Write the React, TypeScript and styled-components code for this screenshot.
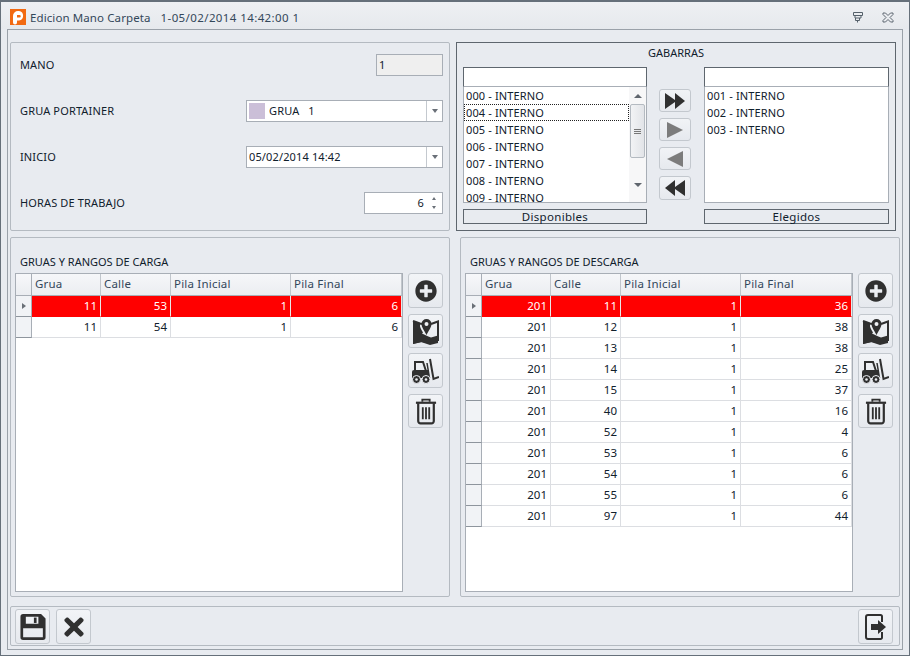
import styled, { createGlobalStyle } from "styled-components";
import { FaPlusCircle, FaTimes } from "react-icons/fa";

const GlobalStyle = createGlobalStyle`
    html, body {
        margin: 0;
        padding: 0;
        background: #e8ebf0;
    }
    * {
        box-sizing: border-box;
    }
`;

const Frame = styled.div`
    width: 910px;
    height: 656px;
    border: 1px solid #66707a;
    border-top-width: 2px;
    background: #e8ebf0;
    font-family: "Noto Sans", "Open Sans", sans-serif;
    font-size: 11px;
    color: #10202c;
    overflow: hidden;
    display: flex;
    flex-direction: column;
`;

const TitleBar = styled.div`
    height: 27px;
    flex: none;
    display: flex;
    align-items: center;
    padding: 3px 15px 0 9px;
    background: linear-gradient(#eef0f3, #e6e9ed);
    font-size: 11.5px;
    color: #33475a;
`;

const TitleText = styled.span`
    margin-left: 4px;
    white-space: pre;
    letter-spacing: 0.1px;
`;

const TitleDoc = styled.span`
    margin-left: 10px;
    white-space: pre;
    letter-spacing: 0.4px;
`;

const TitleIcons = styled.div`
    margin-left: auto;
    display: flex;
    align-items: center;
    gap: 18px;
`;

const Inner = styled.div`
    flex: 1;
    margin: 0 6px 6px 6px;
    border: 1px solid #9aa1a9;
    padding: 12px 2px 3px 2px;
    display: flex;
    flex-direction: column;
    gap: 6px;
`;

const TopRow = styled.div`
    height: 189px;
    flex: none;
    display: flex;
    gap: 6px;
`;

const Panel = styled.div`
    width: 440px;
    border: 1px solid #b4bac1;
    border-radius: 2px;
`;

const FormPanel = styled(Panel)`
    padding: 11px 6px 0 9px;
    display: flex;
    flex-direction: column;
    gap: 24px;
    letter-spacing: 0.14px;
`;

const FormRow = styled.div`
    height: 22px;
    display: flex;
    align-items: center;
    justify-content: space-between;
`;

const RowLabel = styled.span`
    position: relative;
    top: -1px;
`;

const Field = styled.div<{ $w: number; $ro?: boolean }>`
    width: ${(p) => p.$w}px;
    height: 22px;
    border: 1px solid #a8aeb6;
    background: ${(p) => (p.$ro ? "#efefef" : "#fff")};
    display: flex;
    align-items: center;
    padding-left: 2px;
    line-height: 18px;
`;

const Swatch = styled.div`
    width: 16px;
    height: 16px;
    margin-right: 4px;
    background: #cbbfd8;
`;

const GruaName = styled.span`
    white-space: pre;
`;

const DropBtn = styled.div`
    margin-left: auto;
    width: 16px;
    height: 100%;
    border-left: 1px solid #c4c9cf;
    display: flex;
    align-items: center;
    justify-content: center;
    &::after {
        content: "";
        border-left: 3.5px solid transparent;
        border-right: 3.5px solid transparent;
        border-top: 4px solid #6a7078;
    }
`;

const SpinValue = styled.span`
    margin-left: auto;
    margin-right: 2px;
`;

const Spin = styled.div`
    width: 16px;
    height: 100%;
    display: flex;
    flex-direction: column;
    align-items: center;
    justify-content: center;
    gap: 6px;
`;

const SpinArrow = styled.div<{ $up?: boolean }>`
    border-left: 2.5px solid transparent;
    border-right: 2.5px solid transparent;
    ${(p) => (p.$up ? "border-bottom" : "border-top")}: 3px solid #6a7078;
`;

const GabarrasPanel = styled(Panel)`
    border: 1px solid #5e666e;
    border-radius: 0;
    padding: 0 6px;
    display: flex;
    flex-direction: column;
`;

const GabTitle = styled.div`
    height: 24px;
    flex: none;
    line-height: 20px;
    text-align: center;
`;

const GabBody = styled.div`
    display: flex;
    gap: 12px;
`;

const GabColumn = styled.div<{ $w: number; $right?: boolean }>`
    width: ${(p) => p.$w}px;
    margin-left: ${(p) => (p.$right ? 1 : 0)}px;
    display: flex;
    flex-direction: column;
`;

const FilterBox = styled.div`
    height: 20px;
    background: #fff;
    border: 1px solid #5e666e;
    border-bottom-color: #a8aeb6;
`;

const ListBox = styled.div`
    height: 116px;
    background: #fff;
    border: 1px solid #a8aeb6;
    border-top: none;
    display: flex;
    overflow: hidden;
`;

const ListItems = styled.div`
    flex: 1;
    min-width: 0;
    letter-spacing: 0.14px;
`;

const ListItem = styled.div<{ $focus?: boolean }>`
    height: 17px;
    line-height: 15px;
    padding-left: 1px;
    white-space: nowrap;
    border: 1px dotted ${(p) => (p.$focus ? "#222" : "transparent")};
`;

const ScrollBar = styled.div`
    width: 17px;
    flex: none;
    background: #f7f7f8;
    display: flex;
    flex-direction: column;
    align-items: center;
    padding-top: 7px;
`;

const ScrollThumb = styled.div`
    width: 15px;
    height: 54px;
    margin-top: 6px;
    background: linear-gradient(90deg, #f2f3f5, #e2e4e8);
    border: 1px solid #b4bac1;
    border-radius: 2px;
    display: flex;
    flex-direction: column;
    align-items: center;
    justify-content: center;
    gap: 1px;
`;

const Grip = styled.div`
    width: 7px;
    height: 1px;
    background: #777;
`;

const ScrollArrow = styled.div<{ $up?: boolean }>`
    border-left: 4.5px solid transparent;
    border-right: 4.5px solid transparent;
    ${(p) => (p.$up ? "border-bottom" : "border-top")}: 4px solid #60666e;
    ${(p) => (p.$up ? "" : "margin-top: 25px;")}
`;

const ColFooter = styled.div`
    height: 15px;
    margin-top: 6px;
    border: 1px solid #5e666e;
    font-size: 11.5px;
    line-height: 13px;
    text-align: center;
    letter-spacing: 0.3px;
`;

const MoveColumn = styled.div`
    width: 32px;
    padding-top: 22px;
    display: flex;
    flex-direction: column;
    gap: 6px;
`;

const MoveBtn = styled.div<{ $h: number }>`
    height: ${(p) => p.$h}px;
    border: 1px solid #c3c8ce;
    border-radius: 3px;
    background: linear-gradient(#f1f3f6, #e6e9ee);
    display: flex;
    align-items: center;
    justify-content: center;
`;

const GridRow = styled.div`
    height: 360px;
    flex: none;
    display: flex;
    gap: 10px;
`;

const GridPanel = styled(Panel)`
    padding: 0 6px 0 4px;
`;

const GridTitle = styled.div`
    height: 35px;
    padding: 16px 0 0 5px;
    line-height: 16px;
    white-space: nowrap;
`;

const GridBody = styled.div`
    display: flex;
    gap: 5px;
`;

const Table = styled.div`
    width: 388px;
    height: 319px;
    background: #fff;
    border: 1px solid #a8aeb6;
`;

const Row = styled.div<{ $head?: boolean }>`
    display: grid;
    grid-template-columns: 16px 69px 70px 120px 1fr;
    height: ${(p) => (p.$head ? 22 : 21)}px;
`;

const Corner = styled.div<{ $head?: boolean; $plain?: boolean }>`
    background: ${(p) => (p.$plain ? "#f1f3f6" : "linear-gradient(#f7f8fa,#ebedf1)")};
    border-right: 1px solid #a8aeb6;
    border-bottom: 1px solid ${(p) => (p.$head ? "#a8aeb6" : "#8e959d")};
    display: flex;
    align-items: center;
    justify-content: center;
`;

const RowMarker = styled.div`
    border-top: 3.5px solid transparent;
    border-bottom: 3.5px solid transparent;
    border-left: 4px solid #6a7078;
`;

const HeadCell = styled.div`
    background: linear-gradient(#f6f7f9, #ebedf1);
    border-right: 1px solid #c1c6cc;
    border-bottom: 1px solid #a8aeb6;
    padding-left: 3px;
    font-size: 11.5px;
    line-height: 20px;
    color: #33475a;
    letter-spacing: 0.2px;
`;

const Cell = styled.div<{ $sel?: boolean }>`
    background: ${(p) => (p.$sel ? "#ff0000" : "#fff")};
    color: ${(p) => (p.$sel ? "#fff" : "#10202c")};
    border-right: 1px solid ${(p) => (p.$sel ? "#e8e8e8" : "#dcdee2")};
    border-bottom: 1px solid ${(p) => (p.$sel ? "#ff0000" : "#dcdee2")};
    text-align: right;
    padding-right: 3px;
    font-size: 11.5px;
    line-height: 20px;
`;

const IconBtn = styled.div`
    width: 35px;
    height: 35px;
    border: 1px solid #c3c8ce;
    border-radius: 3px;
    background: linear-gradient(#f2f4f7, #e6e9ee);
    display: flex;
    align-items: center;
    justify-content: center;
    color: #303030;
`;

const SideButtons = styled.div`
    display: flex;
    flex-direction: column;
    gap: 5px;
    ${IconBtn}:nth-child(odd) {
        margin-bottom: 1px;
    }
    ${IconBtn}:nth-child(even) {
        height: 34px;
    }
`;

const BottomBar = styled.div`
    height: 40px;
    width: 890px;
    margin-top: 3px;
    border: 1px solid #b4bac1;
    border-radius: 2px;
    padding: 1px 6px 0 4px;
    display: flex;
    align-items: center;
    gap: 6px;
`;

const Spacer = styled.div`
    flex: 1;
`;

const ICON = "#303030";

function Logo() {
    return (
        <svg width="16" height="16" viewBox="0 0 16 16">
            <rect width="16" height="16" fill="#f26a12" />
            <path fillRule="evenodd" d="M3 13.500V7a5 5 0 0 1 5-5h1a4.800 4.800 0 0 1 0 9.500H7v2a2 2 0 0 1-4 0zM7 6v2.500h2.500a1.250 1.250 0 0 0 0-2.500z" fill="#fff" />
        </svg>
    );
}

function PinIcon() {
    return (
        <svg width="12" height="12" viewBox="0 0 12 12" fill="none" stroke="#55606a" strokeWidth="1">
            <path d="M1.500 1.500h9v3h-1.500v2.500h-6v-2.500h-1.500zM3 4.500h6M3.500 7v2.500h4v-2.500M5.500 9.500v2" />
        </svg>
    );
}

function CloseIcon() {
    return (
        <svg width="12" height="11" viewBox="0 0 12 11" fill="none" stroke="#5d6670" strokeWidth="1">
            <path d="M1 1h2.500l2.500 2.500 2.500-2.500h2.500v1.500l-3 3 3 3v1.500h-2.500l-2.500-2.500-2.500 2.500h-2.500v-1.500l3-3-3-3z" />
        </svg>
    );
}

function MapIcon() {
    return (
        <svg width="27" height="27" viewBox="0 0 27 27">
            <path d="M1 3l7 2.500v3c1 3 2 4 3 6l-1 1c3 1 5 3 9 4l7-2V25l-8 2-9-3-8 2z" fill={ICON} />
            <path d="M1 3l7 2.500 2 .5M19 6l7-2.500V23" fill="none" stroke={ICON} strokeWidth="2" />
            <path d="M1 13c4 0 7 3 9 7 4 1 6 2 9 1v5l-9-2-9 2z" fill={ICON} />
            <path fillRule="evenodd" d="M14.500 1a5 5 0 0 1 5 5c0 3-3 7-5 11-2-4-5-8-5-11a5 5 0 0 1 5-5zm0 3a2 2 0 1 0 0 4 2 2 0 0 0 0-4z" fill={ICON} />
        </svg>
    );
}

function ForkliftIcon() {
    return (
        <svg width="27" height="26" viewBox="0 0 27 26">
            <path d="M3 13V4h8l3 9" fill="none" stroke={ICON} strokeWidth="2" />
            <path d="M0 14a2 2 0 0 1 2-2h15v8H0z" fill={ICON} />
            <path d="M15 5l2.500 15" fill="none" stroke={ICON} strokeWidth="1.500" />
            <path d="M18 1l3.500 20 5.500-2" fill="none" stroke={ICON} strokeWidth="2" />
            <circle cx="4.500" cy="21.500" r="4" fill={ICON} stroke="#eceef2" strokeWidth="1" />
            <circle cx="4.500" cy="21.500" r="1.300" fill="#eceef2" />
            <circle cx="14" cy="21.500" r="4" fill={ICON} stroke="#eceef2" strokeWidth="1" />
            <circle cx="14" cy="21.500" r="1.300" fill="#eceef2" />
        </svg>
    );
}

function TrashIcon() {
    return (
        <svg width="22" height="28" viewBox="0 0 24 30" fill="none" stroke={ICON} strokeWidth="2">
            <path d="M1 6h22" strokeWidth="2.400" />
            <path d="M8 5V2.500h8V5" />
            <path d="M3.500 6.500V26a2.500 2.500 0 0 0 2.500 2.500h12a2.500 2.500 0 0 0 2.500-2.500V6.500" strokeWidth="2.400" />
            <path d="M8.500 11v13M12 11v13M15.500 11v13" />
        </svg>
    );
}

function SaveIcon() {
    return (
        <svg width="26" height="26" viewBox="0 0 28 29">
            <path fillRule="evenodd" d="M3 0h20l5 5v21a3 3 0 0 1-3 3H3a3 3 0 0 1-3-3V3a3 3 0 0 1 3-3zm3 3v8h14V3zm-3 13v10h22V16z" fill={ICON} />
            <rect x="15" y="4" width="3" height="6" fill={ICON} />
        </svg>
    );
}

function ExitIcon() {
    return (
        <svg width="22" height="26" viewBox="0 0 22 26">
            <path d="M17 8V2.500A1.500 1.500 0 0 0 15.500 1H3a2 2 0 0 0-2 2v20a2 2 0 0 0 2 2h12.500a1.500 1.500 0 0 0 1.500-1.500V18" fill="none" stroke={ICON} strokeWidth="2" />
            <path d="M6 10h7V6l8 7-8 7v-4H6z" fill={ICON} />
        </svg>
    );
}

function Arrows({ dir, count, color }: { dir: "r" | "l"; count: number; color: string }) {
    const points = count === 2 ? (dir === "r" ? "0,0 10,7 10,0 20,8 10,16 10,9 0,16" : "20,0 10,7 10,0 0,8 10,16 10,9 20,16") : dir === "r" ? "2,0 18,8 2,16" : "18,0 2,8 18,16";
    return (
        <svg width="20" height="16" viewBox="0 0 20 16">
            <polygon points={points} fill={color} />
        </svg>
    );
}

const disponibles = ["000", "004", "005", "006", "007", "008", "009"];
const elegidos = ["001", "002", "003"];

const carga = [
    [11, 53, 1, 6],
    [11, 54, 1, 6],
];

const descarga = [
    [201, 11, 1, 36],
    [201, 12, 1, 38],
    [201, 13, 1, 38],
    [201, 14, 1, 25],
    [201, 15, 1, 37],
    [201, 40, 1, 16],
    [201, 52, 1, 4],
    [201, 53, 1, 6],
    [201, 54, 1, 6],
    [201, 55, 1, 6],
    [201, 97, 1, 44],
];

function DataGrid({ title, rows }: { title: string; rows: number[][] }) {
    return (
        <GridPanel>
            <GridTitle>{title}</GridTitle>
            <GridBody>
                <Table>
                    <Row $head>
                        <Corner $head />
                        <HeadCell>Grua</HeadCell>
                        <HeadCell>Calle</HeadCell>
                        <HeadCell>Pila Inicial</HeadCell>
                        <HeadCell>Pila Final</HeadCell>
                    </Row>
                    {rows.map((r, i) => (
                        <Row key={i}>
                            <Corner $plain>{i === 0 && <RowMarker />}</Corner>
                            {r.map((v, j) => (
                                <Cell key={j} $sel={i === 0}>{v}</Cell>
                            ))}
                        </Row>
                    ))}
                </Table>
                <SideButtons>
                    <IconBtn><FaPlusCircle size={22} /></IconBtn>
                    <IconBtn><MapIcon /></IconBtn>
                    <IconBtn><ForkliftIcon /></IconBtn>
                    <IconBtn><TrashIcon /></IconBtn>
                </SideButtons>
            </GridBody>
        </GridPanel>
    );
}

export default function App() {
    return (
        <Frame>
            <GlobalStyle />
            <TitleBar>
                <Logo />
                <TitleText>Edicion Mano Carpeta</TitleText>
                <TitleDoc>1-05/02/2014 14:42:00 1</TitleDoc>
                <TitleIcons>
                    <PinIcon />
                    <CloseIcon />
                </TitleIcons>
            </TitleBar>
            <Inner>
                <TopRow>
                    <FormPanel>
                        <FormRow>
                            <RowLabel>MANO</RowLabel>
                            <Field $w={67} $ro>1</Field>
                        </FormRow>
                        <FormRow>
                            <RowLabel>GRUA PORTAINER</RowLabel>
                            <Field $w={197}>
                                <Swatch />
                                <GruaName>GRUA   1</GruaName>
                                <DropBtn />
                            </Field>
                        </FormRow>
                        <FormRow>
                            <RowLabel>INICIO</RowLabel>
                            <Field $w={197}>
                                05/02/2014 14:42
                                <DropBtn />
                            </Field>
                        </FormRow>
                        <FormRow>
                            <RowLabel>HORAS DE TRABAJO</RowLabel>
                            <Field $w={79}>
                                <SpinValue>6</SpinValue>
                                <Spin>
                                    <SpinArrow $up />
                                    <SpinArrow />
                                </Spin>
                            </Field>
                        </FormRow>
                    </FormPanel>
                    <GabarrasPanel>
                        <GabTitle>GABARRAS</GabTitle>
                        <GabBody>
                            <GabColumn $w={184}>
                                <FilterBox />
                                <ListBox>
                                    <ListItems>
                                        {disponibles.map((c) => (
                                            <ListItem key={c} $focus={c === "004"}>{c} - INTERNO</ListItem>
                                        ))}
                                    </ListItems>
                                    <ScrollBar>
                                        <ScrollArrow $up />
                                        <ScrollThumb>
                                            <Grip />
                                            <Grip />
                                            <Grip />
                                        </ScrollThumb>
                                        <ScrollArrow />
                                    </ScrollBar>
                                </ListBox>
                                <ColFooter>Disponibles</ColFooter>
                            </GabColumn>
                            <MoveColumn>
                                <MoveBtn $h={23}><Arrows dir="r" count={2} color="#303030" /></MoveBtn>
                                <MoveBtn $h={23}><Arrows dir="r" count={1} color="#7c7c7c" /></MoveBtn>
                                <MoveBtn $h={23}><Arrows dir="l" count={1} color="#7c7c7c" /></MoveBtn>
                                <MoveBtn $h={24}><Arrows dir="l" count={2} color="#303030" /></MoveBtn>
                            </MoveColumn>
                            <GabColumn $w={185} $right>
                                <FilterBox />
                                <ListBox>
                                    <ListItems>
                                        {elegidos.map((c) => (
                                            <ListItem key={c}>{c} - INTERNO</ListItem>
                                        ))}
                                    </ListItems>
                                </ListBox>
                                <ColFooter>Elegidos</ColFooter>
                            </GabColumn>
                        </GabBody>
                    </GabarrasPanel>
                </TopRow>
                <GridRow>
                    <DataGrid title="GRUAS Y RANGOS DE CARGA" rows={carga} />
                    <DataGrid title="GRUAS Y RANGOS DE DESCARGA" rows={descarga} />
                </GridRow>
                <BottomBar>
                    <IconBtn><SaveIcon /></IconBtn>
                    <IconBtn><FaTimes size={28} /></IconBtn>
                    <Spacer />
                    <IconBtn><ExitIcon /></IconBtn>
                </BottomBar>
            </Inner>
        </Frame>
    );
}
